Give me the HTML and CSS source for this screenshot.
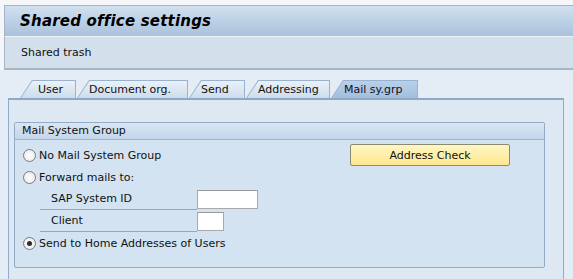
FILE: index.html
```html
<!DOCTYPE html>
<html lang="en">
<head>
    <meta charset="UTF-8">
    <title>Shared office settings</title>
    <link rel="stylesheet" href="styles.css">
</head>
<body>
    <div class="titlebar"><h1>Shared office settings</h1></div>
    <div class="toolbar">Shared trash</div>

    <div class="content">
        <div class="tabs">
            <div class="tab tab-user">User</div>
            <div class="tab tab-doc">Document org.</div>
            <div class="tab tab-send">Send</div>
            <div class="tab tab-addr">Addressing</div>
            <div class="tab tab-mail active">Mail sy.grp</div>
        </div>

        <div class="panel">
            <div class="group">
                <div class="group-head">Mail System Group</div>
                <div class="group-body">
                    <div class="row row-first">
                        <label class="radio"><span class="dot"></span>No Mail System Group</label>
                        <button class="btn">Address Check</button>
                    </div>
                    <div class="row">
                        <label class="radio"><span class="dot"></span>Forward mails to:</label>
                    </div>
                    <div class="row field">
                        <span class="field-label">SAP System ID</span>
                        <input type="text" class="inp inp-sid">
                    </div>
                    <div class="row field">
                        <span class="field-label">Client</span>
                        <input type="text" class="inp inp-client">
                    </div>
                    <div class="row">
                        <label class="radio"><span class="dot checked"></span>Send to Home Addresses of Users</label>
                    </div>
                </div>
            </div>
        </div>
    </div>
</body>
</html>
```

FILE: styles.css
```css
body { margin: 0; background: #f4f6f9; font-family: "DejaVu Sans", sans-serif; font-size: 11px; color: #111; height: 279px; overflow: hidden; }
.titlebar { margin: 5px 0 0 4px; height: 30px; border-top: 1px solid #a3b5c8; border-left: 1px solid #a3b5c8; background: linear-gradient(#d0e0ef, #a9c2dc); display: flex; align-items: center; }
.titlebar h1 { margin: 0 0 0 15px; font-size: 15px; font-weight: bold; font-style: italic; color: #000; letter-spacing: 0.2px; }
.toolbar { margin-left: 4px; height: 31px; border-top: 1px solid #eef3f8; border-left: 1px solid #a3b5c8; border-bottom: 2px solid #a9b5c2; background: #d3dfea; display: flex; align-items: center; padding-left: 16px; font-size: 11px; }
.content { background: #e4ecf5; height: 210px; padding-top: 10px; }

.tabs { display: flex; height: 18px; padding-left: 20px; }
.tab { position: relative; z-index: 0; box-sizing: border-box; height: 18px; line-height: 20px; padding-left: 12px; margin-right: 1px; white-space: nowrap; font-size: 11px; background: #98b2cf; clip-path: polygon(12px 0, 100% 0, 100% 100%, 0 100%); }
.tab::before { content: ""; position: absolute; left: 1px; top: 1px; right: 1px; bottom: 0; background: linear-gradient(#eaf1f8, #cddcec); clip-path: polygon(11.5px 0, 100% 0, 100% 100%, 0 100%); z-index: -1; }
.tab-user { width: 56px; padding-left: 18px; }
.tab-doc { width: 111px; }
.tab-send { width: 56px; }
.tab-addr { width: 84px; }
.tab-mail { width: 87px; padding-left: 13px; }
.tab.active::before { background: linear-gradient(#b9d0ea, #a2bfe0); }

.panel { margin-left: 8px; width: 556px; height: 190px; border: 1px solid #91abca; border-top: 2px solid #8ea9c8; border-bottom: none; background: #dde8f3; padding: 22px 0 0 5px; box-sizing: border-box; }
.group { width: 531px; height: 146px; border: 1px solid #92abc6; border-radius: 2px; background: #d3e3f2; box-sizing: border-box; }
.group-head { height: 16px; line-height: 16px; padding-left: 7px; font-size: 11px; background: linear-gradient(#d9e6f3, #c3d6ea); border-bottom: 1px solid #9fb6cf; }
.group-body { padding: 4px 0 0 8px; }
.row { display: flex; align-items: center; height: 22px; }
.radio { display: flex; align-items: center; font-size: 11px; }
.dot { width: 11px; height: 11px; border-radius: 50%; border: 1px solid #7a7a7a; background: radial-gradient(#ffffff, #e6e6e6); margin-right: 3px; box-sizing: content-box; display: inline-flex; align-items: center; justify-content: center; }
.dot.checked::after { content: ""; width: 5px; height: 5px; border-radius: 50%; background: #2b2b2b; }
.btn { margin-left: 135px; width: 160px; height: 22px; font-family: inherit; font-size: 11px; color: #111; background: linear-gradient(#fff6c4, #fde88f); border: 1px solid #8d8a72; border-radius: 2px; padding: 0; }
.row-first .radio { width: 192px; }
.field { margin-left: 17px; width: 250px; }
.field-label { width: 157px; height: 21px; line-height: 20px; padding-left: 11px; font-size: 11px; border-bottom: 1px solid #9aa8b6; box-sizing: border-box; }
.inp { height: 19px; border: 1px solid #a9a9a9; border-top-color: #9a9a9a; background: #fff; box-sizing: border-box; padding: 0; margin: 0; }
.inp-sid { width: 61px; }
.inp-client { width: 27px; }
```
